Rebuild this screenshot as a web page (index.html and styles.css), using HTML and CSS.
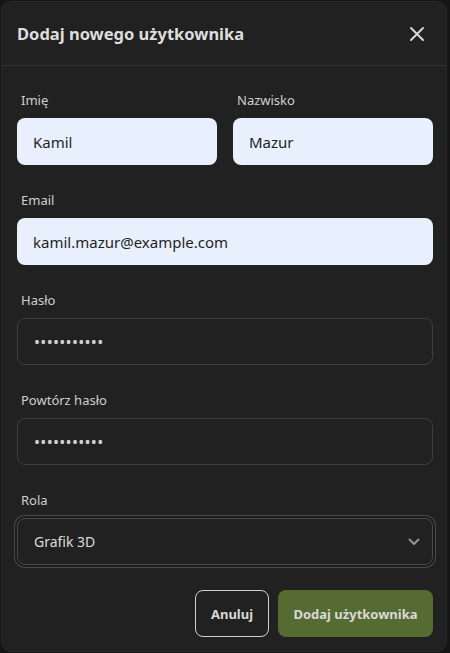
FILE: index.html
```html
<!DOCTYPE html>
<html lang="pl">
<head>
<meta charset="utf-8">
<link rel="stylesheet" href="styles.css">
<title>Dodaj nowego użytkownika</title>
</head>
<body>
<div class="modal">
  <div class="modal-header">
    <h2 class="modal-title">Dodaj nowego użytkownika</h2>
    <button class="close-btn" aria-label="Zamknij">
      <svg width="16" height="16" viewBox="0 0 16 16"><path d="M2 2L14 14M14 2L2 14" stroke="#d6d6d6" stroke-width="2" stroke-linecap="round"/></svg>
    </button>
  </div>
  <form class="modal-body">
    <div class="row">
      <div class="field">
        <label class="label">Imię</label>
        <div class="input filled">Kamil</div>
      </div>
      <div class="field">
        <label class="label">Nazwisko</label>
        <div class="input filled">Mazur</div>
      </div>
    </div>
    <div class="field">
      <label class="label">Email</label>
      <div class="input filled">kamil.mazur@example.com</div>
    </div>
    <div class="field">
      <label class="label">Hasło</label>
      <div class="input dark dots">•••••••••••</div>
    </div>
    <div class="field">
      <label class="label">Powtórz hasło</label>
      <div class="input dark dots">•••••••••••</div>
    </div>
    <div class="field">
      <label class="label">Rola</label>
      <div class="input dark select">
        <span>Grafik 3D</span>
        <svg width="12" height="8" viewBox="0 0 12 8"><path d="M1.5 1.5L6 6L10.5 1.5" fill="none" stroke="#8a93a6" stroke-width="2" stroke-linecap="round" stroke-linejoin="round"/></svg>
      </div>
    </div>
    <div class="actions">
      <button type="button" class="btn btn-outline">Anuluj</button>
      <button type="button" class="btn btn-primary">Dodaj użytkownika</button>
    </div>
  </form>
</div>
</body>
</html>
```

FILE: styles.css
```css
* { box-sizing: border-box; }
html, body { margin: 0; padding: 0; }
body {
  background: #141514;
  font-family: "Noto Sans", "Open Sans", sans-serif;
  width: 450px;
  height: 653px;
  padding: 1px 3px 1px 1px;
}
.modal {
  width: 446px;
  height: 651px;
  background: #212121;
  border-radius: 10px;
  border: 1px solid #2a2a2a;
  display: flex;
  flex-direction: column;
  overflow: hidden;
}
.modal-header {
  height: 64px;
  border-bottom: 1px solid #333;
  display: flex;
  align-items: center;
  justify-content: space-between;
  padding: 0 21px 0 15px;
}
.modal-title {
  margin: 0;
  font-size: 16.5px;
  font-weight: 700;
  color: #dedede;
}
.close-btn {
  background: none;
  border: 0;
  padding: 0;
  width: 16px;
  height: 16px;
  display: flex;
}
.modal-body {
  padding: 25px 13px 0 15px;
  display: flex;
  flex-direction: column;
  gap: 26px;
}
.row {
  display: grid;
  grid-template-columns: 1fr 1fr;
  gap: 16px;
}
.field {
  display: flex;
  flex-direction: column;
}
.label {
  font-size: 13px;
  line-height: 18px;
  color: #cfcfcf;
  padding-left: 4px;
  margin-bottom: 9px;
}
.input {
  height: 47px;
  border-radius: 8px;
  padding: 0 16px;
  display: flex;
  align-items: center;
  font-size: 15px;
}
.filled {
  background: #e8f0fe;
  color: #1f1f1f;
}
.dark {
  background: #212121;
  border: 1px solid #3f3f3f;
  color: #dcdcdc;
}
.dots {
  font-size: 16px;
  letter-spacing: 0.3px;
  color: #d0d0d0;
}
.select {
  justify-content: space-between;
  font-size: 14px;
  padding: 0 12px 0 16px;
  border-color: #4a4a4a;
  box-shadow: 0 0 0 2px #1c1c1c, 0 0 0 3px #474747;
}
.actions {
  display: flex;
  justify-content: flex-end;
  gap: 9px;
  margin-top: -1px;
}
.btn {
  height: 47px;
  border-radius: 8px;
  font-family: "Noto Sans", "Open Sans", sans-serif;
  font-size: 13px;
  font-weight: 700;
  color: #d8d8d8;
  padding: 0;
  white-space: nowrap;
  cursor: pointer;
}
.btn-outline {
  background: transparent;
  border: 1px solid #cfcfcf;
  width: 74px;
}
.btn-primary {
  background: #566b32;
  border: 0;
  width: 155px;
}
```
